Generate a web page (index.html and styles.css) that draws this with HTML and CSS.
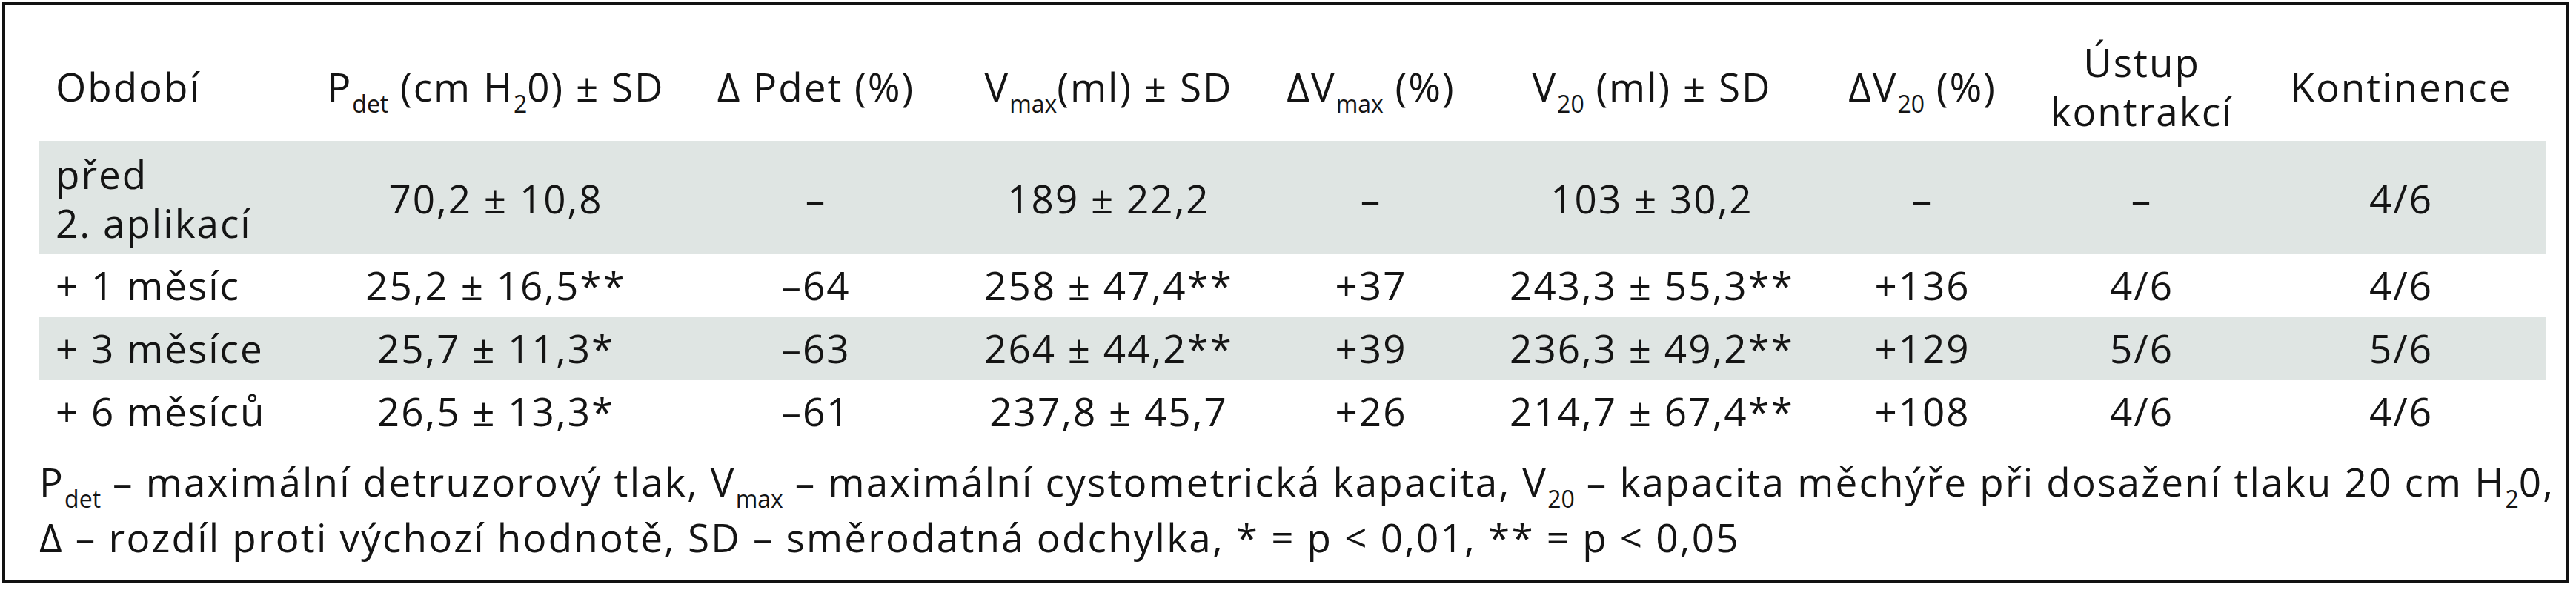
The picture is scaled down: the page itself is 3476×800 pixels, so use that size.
FILE: index.html
```html
<!DOCTYPE html>
<html lang="cs">
<head>
<meta charset="utf-8">
<title>Tabulka</title>
<link rel="stylesheet" href="styles.css">
</head>
<body>
<div class="frame">
  <table class="data">
    <colgroup>
      <col class="c1"><col class="c2"><col class="c3"><col class="c4"><col class="c5"><col class="c6"><col class="c7"><col class="c8"><col class="c9">
    </colgroup>
    <thead>
      <tr>
        <th class="first">Období</th>
        <th>P<span class="sub">det</span> (cm H<span class="sub">2</span>0) ± SD</th>
        <th>Δ Pdet (%)</th>
        <th>V<span class="sub">max</span>(ml) ± SD</th>
        <th>ΔV<span class="sub">max</span> (%)</th>
        <th>V<span class="sub">20</span> (ml) ± SD</th>
        <th>ΔV<span class="sub">20</span> (%)</th>
        <th>Ústup<br>kontrakcí</th>
        <th>Kontinence</th>
      </tr>
    </thead>
    <tbody>
      <tr class="shade tall">
        <td class="first">před<br>2. aplikací</td>
        <td>70,2 ± 10,8</td>
        <td>–</td>
        <td>189 ± 22,2</td>
        <td>–</td>
        <td>103 ± 30,2</td>
        <td>–</td>
        <td>–</td>
        <td>4/6</td>
      </tr>
      <tr>
        <td class="first">+ 1 měsíc</td>
        <td>25,2 ± 16,5**</td>
        <td>–64</td>
        <td>258 ± 47,4**</td>
        <td>+37</td>
        <td>243,3 ± 55,3**</td>
        <td>+136</td>
        <td>4/6</td>
        <td>4/6</td>
      </tr>
      <tr class="shade">
        <td class="first">+ 3 měsíce</td>
        <td>25,7 ± 11,3*</td>
        <td>–63</td>
        <td>264 ± 44,2**</td>
        <td>+39</td>
        <td>236,3 ± 49,2**</td>
        <td>+129</td>
        <td>5/6</td>
        <td>5/6</td>
      </tr>
      <tr>
        <td class="first">+ 6 měsíců</td>
        <td>26,5 ± 13,3*</td>
        <td>–61</td>
        <td>237,8 ± 45,7</td>
        <td>+26</td>
        <td>214,7 ± 67,4**</td>
        <td>+108</td>
        <td>4/6</td>
        <td>4/6</td>
      </tr>
    </tbody>
  </table>
  <p class="note"><span class="l1">P<span class="sub">det</span> – maximální detruzorový tlak, V<span class="sub">max</span> – maximální cystometrická kapacita, V<span class="sub">20</span> – kapacita měchýře při dosažení tlaku 20 cm H<span class="sub">2</span>0,</span><br><span class="l2">Δ – rozdíl proti výchozí hodnotě, SD – směrodatná odchylka, * = p &lt; 0,01, ** = p &lt; 0,05</span></p>
</div>
</body>
</html>
```

FILE: styles.css
```css
html, body {
  margin: 0;
  padding: 0;
  background: #ffffff;
}

body {
  padding: 3px 0 0 3px;
  font-family: "Open Sans", "Noto Sans", sans-serif;
  font-size: 53px;
  color: #141414;
}

.frame {
  box-sizing: border-box;
  width: 3463px;
  height: 784px;
  border: 4px solid #111111;
  padding: 0 26px 0 46px;
}

.data {
  width: 3383px;
  table-layout: fixed;
  border-collapse: collapse;
  border-spacing: 0;
}

.c1 { width: 381px; }
.c2 { width: 470px; }
.c3 { width: 394px; }
.c4 { width: 396px; }
.c5 { width: 312px; }
.c6 { width: 446px; }
.c7 { width: 284px; }
.c8 { width: 308px; }
.c9 { width: 392px; }

.data th,
.data td {
  font-weight: 400;
  line-height: 66px;
  text-align: center;
  vertical-align: middle;
  white-space: nowrap;
  padding: 0;
  letter-spacing: 2px;
}

.data th {
  padding-top: 44px;
  padding-bottom: 7px;
}

.data td {
  padding-top: 9px;
  padding-bottom: 10px;
}

.data tr.tall td {
  padding-top: 12px;
  padding-bottom: 9px;
}

.data .first {
  text-align: left;
  padding-left: 22px;
}

.shade td {
  background: #dfe5e3;
}

.sub {
  font-size: 32px;
  line-height: 0;
  vertical-align: -15px;
  letter-spacing: 0;
}

.note {
  margin: 14px 0 0;
  line-height: 75px;
  white-space: nowrap;
  letter-spacing: 2.2px;
}
```
